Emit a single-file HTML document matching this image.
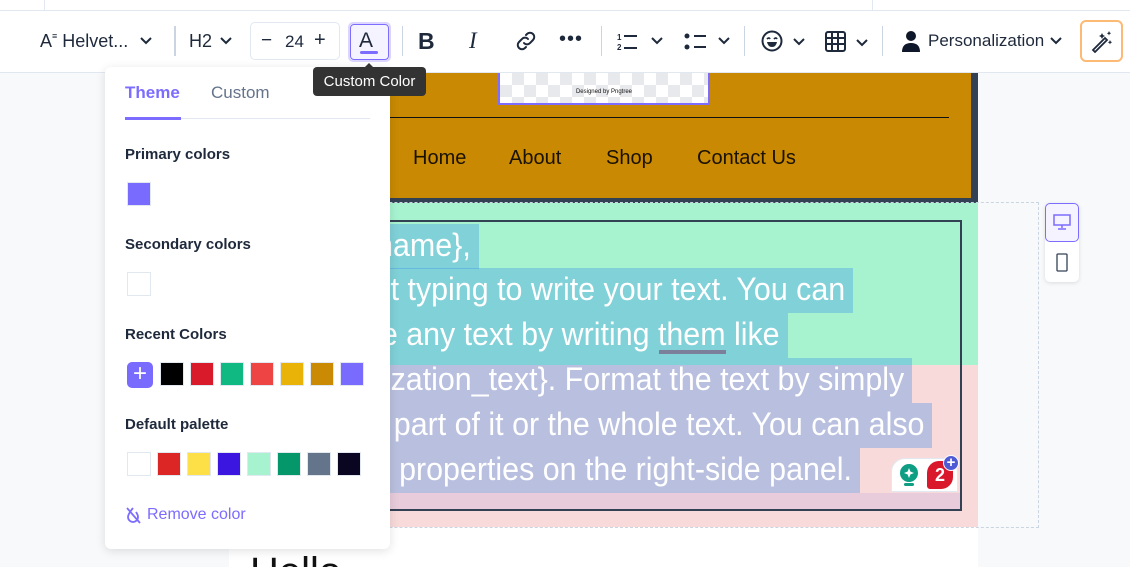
<!DOCTYPE html>
<html><head><style>
*{margin:0;padding:0;box-sizing:border-box}
html,body{width:1130px;height:567px;overflow:hidden}
body{background:#f7f9fb;font-family:"Liberation Sans",Arial,sans-serif;position:relative}
.a{position:absolute}
.tb{color:#1e293b}
.sw{position:absolute;width:24px;height:24px;border:1px solid #e2e8f0}
.lbl{position:absolute;left:125px;font-size:15px;font-weight:bold;color:#1e293b}
.ln{position:absolute;left:229px;height:45px;background:rgba(40,133,235,0.3);overflow:hidden}
.tx{position:absolute;right:8px;top:1px;white-space:nowrap;color:#fff;font-size:32px;line-height:40px;transform:scaleX(0.95);transform-origin:right}
svg{display:block}
</style></head><body>
<!-- top strip -->
<div class="a" style="left:0;top:0;width:1130px;height:11px;background:#fff;border-bottom:1px solid #e2e8f0"></div>
<div class="a" style="left:44px;top:0;width:1px;height:10px;background:#e2e8f0"></div>
<div class="a" style="left:872px;top:0;width:1px;height:10px;background:#e2e8f0"></div>
<!-- toolbar -->
<div class="a" style="left:0;top:11px;width:1130px;height:62px;background:#fff;border-bottom:1px solid #e2e8f0"></div>
<div class="a tb" style="left:40px;top:31px;font-size:18px">A<span style="font-size:9px;vertical-align:top">≡</span> Helvet...</div>
<svg class="a" style="left:139px;top:36px" width="14" height="10"><path d="M2 2l5 5 5-5" stroke="#1e293b" stroke-width="2" fill="none"/></svg>
<div class="a" style="left:174px;top:26px;width:2px;height:30px;background:#cbd5e1"></div>
<div class="a tb" style="left:189px;top:31px;font-size:18px">H2</div>
<svg class="a" style="left:219px;top:36px" width="14" height="10"><path d="M2 2l5 5 5-5" stroke="#1e293b" stroke-width="2" fill="none"/></svg>
<div class="a" style="left:250px;top:22px;width:90px;height:38px;border:1px solid #e2e8f0;border-radius:5px"></div>
<div class="a tb" style="left:261px;top:30px;font-size:19px">−</div>
<div class="a tb" style="left:285px;top:32px;font-size:17px">24</div>
<div class="a tb" style="left:314px;top:29px;font-size:20px">+</div>
<div class="a" style="left:348px;top:22px;width:43px;height:40px;border-radius:5px;border:2px solid #ddd6fe"></div>
<div class="a" style="left:350px;top:24px;width:39px;height:36px;border-radius:4px;border:1px solid #7c6cff;background:#f5f3ff"></div>
<div class="a" style="left:359px;top:29px;font-size:21px;color:#1e293b">A</div>
<div class="a" style="left:360px;top:51px;width:18px;height:3px;background:#7c6cff;border-radius:2px"></div>
<div class="a" style="left:402px;top:26px;width:1px;height:30px;background:#cbd5e1"></div>
<div class="a tb" style="left:418px;top:28px;font-size:23px;font-weight:bold">B</div>
<div class="a tb" style="left:469px;top:28px;font-size:23px;font-family:'Liberation Serif',serif;font-style:italic">I</div>
<svg class="a" style="left:514px;top:29px" width="24" height="24" viewBox="0 0 24 24"><path d="M10 14a4 4 0 0 0 6 0l3-3a4 4 0 0 0-6-6l-1 1M14 10a4 4 0 0 0-6 0l-3 3a4 4 0 0 0 6 6l1-1" stroke="#1e293b" stroke-width="2" fill="none" stroke-linecap="round"/></svg>
<div class="a tb" style="left:559px;top:28px;font-size:20px;letter-spacing:1px">•••</div>
<div class="a" style="left:601px;top:26px;width:1px;height:30px;background:#cbd5e1"></div>
<svg class="a" style="left:615px;top:30px" width="60" height="22"><text x="2" y="10" font-size="8" fill="#1e293b" font-weight="bold">1</text><text x="2" y="20" font-size="8" fill="#1e293b" font-weight="bold">2</text><path d="M9 6h13M9 18h13" stroke="#1e293b" stroke-width="2"/><path d="M37 8l5 5 5-5" stroke="#1e293b" stroke-width="2" fill="none"/></svg>
<svg class="a" style="left:683px;top:30px" width="52" height="22"><circle cx="4" cy="6" r="2.5" fill="#1e293b"/><circle cx="4" cy="17" r="2.5" fill="#1e293b"/><path d="M11 6h12M11 17h12" stroke="#1e293b" stroke-width="2"/><path d="M36 8l5 5 5-5" stroke="#1e293b" stroke-width="2" fill="none"/></svg>
<div class="a" style="left:744px;top:26px;width:1px;height:30px;background:#cbd5e1"></div>
<svg class="a" style="left:760px;top:29px" width="48" height="24"><circle cx="12" cy="12" r="9.5" stroke="#1e293b" stroke-width="2" fill="none"/><path d="M7 10q2-2 3 0M14 10q2-2 3 0" stroke="#1e293b" stroke-width="1.8" fill="none"/><path d="M7 13h10q-1 5-5 5t-5-5z" fill="#1e293b"/><path d="M34 10l5 5 5-5" stroke="#1e293b" stroke-width="2" fill="none"/></svg>
<svg class="a" style="left:824px;top:30px" width="48" height="24"><rect x="2" y="2" width="19" height="19" rx="2" stroke="#1e293b" stroke-width="2" fill="none"/><path d="M2 8h19M2 14h19M8 2v19M14 2v19" stroke="#1e293b" stroke-width="2"/><path d="M33 10l5 5 5-5" stroke="#1e293b" stroke-width="2" fill="none"/></svg>
<div class="a" style="left:882px;top:26px;width:1px;height:30px;background:#cbd5e1"></div>
<svg class="a" style="left:901px;top:29px" width="20" height="24"><circle cx="10" cy="7" r="5" fill="#0f172a"/><path d="M1 23q0-9 9-9t9 9z" fill="#0f172a"/></svg>
<div class="a tb" style="left:928px;top:31px;font-size:17px">Personalization</div>
<svg class="a" style="left:1049px;top:36px" width="14" height="10"><path d="M2 2l5 5 5-5" stroke="#1e293b" stroke-width="2" fill="none"/></svg>
<div class="a" style="left:1080px;top:20px;width:43px;height:42px;border-radius:6px;border:2px solid #fdba74;background:#fff"></div>
<svg class="a" style="left:1090px;top:29px" width="24" height="24"><path d="M3 21l12-12 2 2-12 12z" stroke="#1e293b" stroke-width="1.8" fill="none"/><path d="M12 4l1 2 2 1-2 1-1 2-1-2-2-1 2-1zM19 2l.7 1.5 1.5.7-1.5.7L19 6.5l-.7-1.5-1.5-.7 1.5-.7zM20 11l.7 1.5 1.5.7-1.5.7L20 15.5l-.7-1.5-1.5-.7 1.5-.7z" fill="#1e293b"/></svg>

<!-- canvas -->
<div class="a" style="left:229px;top:73px;width:749px;height:494px;background:#fff"></div>
<div class="a" style="left:229px;top:73px;width:749px;height:130px;background:#c98903;border-right:7px solid #334155;border-bottom:5px solid #334155"></div>
<div class="a" style="left:498px;top:73px;width:212px;height:32px;border:2px solid #7c6cff;border-top:none;background:repeating-conic-gradient(#e8e9ec 0 25%,#fff 0 50%) 0 0/24px 24px"></div>
<div class="a" style="left:498px;top:89px;width:212px;text-align:center;font-size:6px;color:#111">Designed by Pngtree</div>
<div class="a" style="left:229px;top:117px;width:720px;height:1px;background:#111"></div>
<div class="a" style="left:413px;top:147px;font-size:20px;color:#1a1200">Home</div>
<div class="a" style="left:509px;top:147px;font-size:20px;color:#1a1200">About</div>
<div class="a" style="left:606px;top:147px;font-size:20px;color:#1a1200">Shop</div>
<div class="a" style="left:697px;top:147px;font-size:20px;color:#1a1200">Contact Us</div>

<div class="a" style="left:229px;top:203px;width:749px;height:162px;background:#a7f3d0"></div>
<div class="a" style="left:229px;top:365px;width:749px;height:162px;background:#f8dada"></div>
<div class="a" style="left:229px;top:202px;width:810px;height:326px;border:1px dashed #cbd5e1"></div>
<div class="a" style="left:229px;top:220px;width:733px;height:291px;border:2px solid #334155"></div>
<div class="a" style="left:231px;top:493px;width:729px;height:16px;background:rgba(120,110,230,0.12)"></div>

<div class="ln" style="top:224px;width:250px"><span class="tx">Hi {first_name},</span></div>
<div class="ln" style="top:268px;width:624px"><span class="tx">Start typing to write your text. You can</span></div>
<div class="ln" style="top:313px;width:559px"><span class="tx">personalize any text by writing them like</span></div>
<div class="ln" style="top:358px;width:683px"><span class="tx">{personalization_text}. Format the text by simply</span></div>
<div class="ln" style="top:403px;width:703px"><span class="tx">selecting a part of it or the whole text. You can also</span></div>
<div class="ln" style="top:448px;width:631px"><span class="tx">change the properties on the right-side panel.</span></div>
<div class="a" style="left:659px;top:350px;width:67px;height:4px;background:#7b7f99"></div>

<div class="a" style="left:891px;top:458px;width:67px;height:34px;background:#fff;border:1px solid #e2e8f0;border-radius:14px 14px 0 0"></div>
<svg class="a" style="left:898px;top:462px" width="24" height="28"><circle cx="11" cy="11" r="9" fill="#0d9e84"/><path d="M11 6l2 5-2 5-2-5z M6 11l5-2 5 2-5 2z" fill="#fff"/><rect x="6" y="21" width="10" height="3" rx="1.5" fill="#0d9e84"/></svg>
<div class="a" style="left:927px;top:461px;width:26px;height:28px;background:#d9182c;border-radius:12px 3px 12px 3px;color:#fff;font-weight:bold;font-size:18px;text-align:center;line-height:28px">2</div>
<div class="a" style="left:943px;top:455px;width:16px;height:16px;border-radius:50%;background:#4f5bd5;border:1px solid #fff;color:#fff;font-size:15px;font-weight:bold;line-height:13px;text-align:center">+</div>

<div class="a" style="left:250px;top:550px;font-size:40px;color:#111">Hello</div>

<!-- device toggle -->
<div class="a" style="left:1045px;top:203px;width:34px;height:79px;background:#fff;border-radius:5px;box-shadow:0 1px 4px rgba(0,0,0,.12)"></div>
<div class="a" style="left:1045px;top:203px;width:34px;height:39px;border:1px solid #7c6cff;border-radius:5px;background:#f5f3ff"></div>
<svg class="a" style="left:1053px;top:214px" width="18" height="16"><rect x="1" y="1" width="16" height="10" stroke="#7c6cff" stroke-width="1.5" fill="none"/><path d="M9 11v3M5 15h8" stroke="#7c6cff" stroke-width="1.5"/></svg>
<svg class="a" style="left:1056px;top:253px" width="12" height="20"><rect x="1" y="1" width="10" height="17" rx="1" stroke="#334155" stroke-width="1.3" fill="none"/></svg>

<!-- color panel -->
<div class="a" style="left:105px;top:67px;width:285px;height:482px;background:#fff;border-radius:6px;box-shadow:0 2px 10px rgba(0,0,0,.12)"></div>
<div class="a" style="left:125px;top:83px;font-size:17px;font-weight:bold;color:#7c6cff">Theme</div>
<div class="a" style="left:211px;top:83px;font-size:17px;color:#64748b">Custom</div>
<div class="a" style="left:125px;top:118px;width:245px;height:1px;background:#e2e8f0"></div>
<div class="a" style="left:125px;top:117px;width:56px;height:3px;background:#7c6cff"></div>
<div class="lbl" style="top:146px">Primary colors</div>
<div class="sw" style="left:127px;top:182px;background:#7a6bff"></div>
<div class="lbl" style="top:236px">Secondary colors</div>
<div class="sw" style="left:127px;top:272px;background:#fff"></div>
<div class="lbl" style="top:326px">Recent Colors</div>
<div class="a" style="left:127px;top:362px;width:26px;height:26px;background:#7a6bff;border-radius:5px;color:#fff;font-size:24px;line-height:24px;text-align:center">+</div>
<div class="sw" style="left:160px;top:362px;background:#000"></div>
<div class="sw" style="left:190px;top:362px;background:#d91a2a"></div>
<div class="sw" style="left:220px;top:362px;background:#10b981"></div>
<div class="sw" style="left:250px;top:362px;background:#ef4444"></div>
<div class="sw" style="left:280px;top:362px;background:#eab308"></div>
<div class="sw" style="left:310px;top:362px;background:#ca8a04"></div>
<div class="sw" style="left:340px;top:362px;background:#7a6bff"></div>
<div class="lbl" style="top:416px">Default palette</div>
<div class="sw" style="left:127px;top:452px;background:#fff"></div>
<div class="sw" style="left:157px;top:452px;background:#dc2626"></div>
<div class="sw" style="left:187px;top:452px;background:#fde047"></div>
<div class="sw" style="left:217px;top:452px;background:#3a16e0"></div>
<div class="sw" style="left:247px;top:452px;background:#a7f3d0"></div>
<div class="sw" style="left:277px;top:452px;background:#059669"></div>
<div class="sw" style="left:307px;top:452px;background:#64748b"></div>
<div class="sw" style="left:337px;top:452px;background:#0a0520"></div>
<svg class="a" style="left:125px;top:506px" width="17" height="18"><path d="M8 2q-5 6-5 9a5 5 0 0 0 10 0q0-2-2-5" stroke="#7c6cff" stroke-width="1.8" fill="none"/><path d="M2 2l13 15" stroke="#7c6cff" stroke-width="1.8"/></svg>
<div class="a" style="left:147px;top:506px;font-size:16px;color:#7c6cff">Remove color</div>

<!-- tooltip -->
<div class="a" style="left:363px;top:63px;width:0;height:0;border:6px solid transparent;border-top:none;border-bottom:6px solid #333"></div>
<div class="a" style="left:313px;top:67px;width:113px;height:29px;background:#333;border-radius:4px;color:#fff;font-size:15px;line-height:29px;text-align:center">Custom Color</div>
</body></html>
